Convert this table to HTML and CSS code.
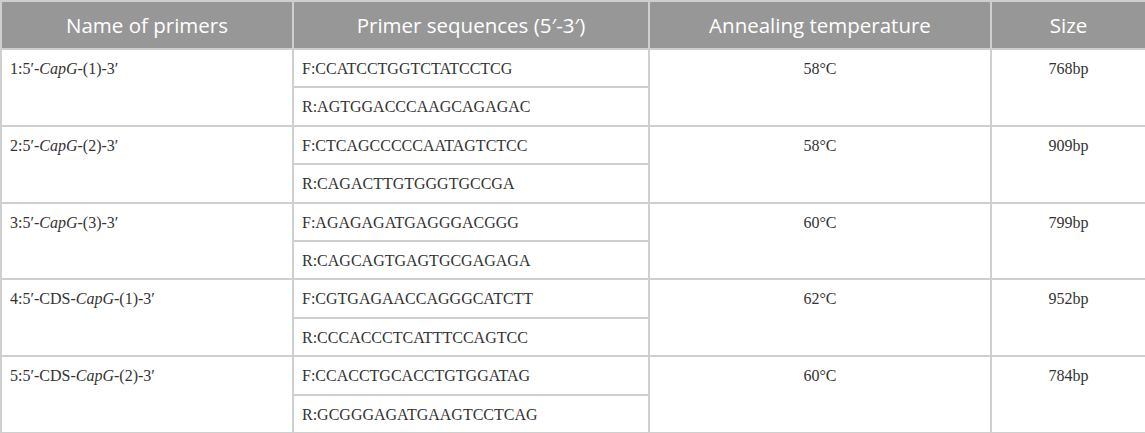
FILE: index.html
```html
<!DOCTYPE html>
<html>
<head>
<meta charset="utf-8">
<link rel="stylesheet" href="styles.css">
</head>
<body>
<table class="primers">
  <colgroup>
    <col class="c1"><col class="c2"><col class="c3"><col class="c4">
  </colgroup>
  <thead>
    <tr><th>Name of primers</th><th>Primer sequences (5′-3′)</th><th>Annealing temperature</th><th>Size</th></tr>
  </thead>
  <tbody>
    <tr><td rowspan="2" class="name">1:5′-<i>CapG</i>-(1)-3′</td><td>F:CCATCCTGGTCTATCCTCG</td><td rowspan="2" class="mid">58°C</td><td rowspan="2" class="mid">768bp</td></tr>
    <tr><td>R:AGTGGACCCAAGCAGAGAC</td></tr>
    <tr><td rowspan="2" class="name">2:5′-<i>CapG</i>-(2)-3′</td><td>F:CTCAGCCCCCAATAGTCTCC</td><td rowspan="2" class="mid">58°C</td><td rowspan="2" class="mid">909bp</td></tr>
    <tr><td>R:CAGACTTGTGGGTGCCGA</td></tr>
    <tr><td rowspan="2" class="name">3:5′-<i>CapG</i>-(3)-3′</td><td>F:AGAGAGATGAGGGACGGG</td><td rowspan="2" class="mid">60°C</td><td rowspan="2" class="mid">799bp</td></tr>
    <tr><td>R:CAGCAGTGAGTGCGAGAGA</td></tr>
    <tr><td rowspan="2" class="name">4:5′-CDS-<i>CapG</i>-(1)-3′</td><td>F:CGTGAGAACCAGGGCATCTT</td><td rowspan="2" class="mid">62°C</td><td rowspan="2" class="mid">952bp</td></tr>
    <tr><td>R:CCCACCCTCATTTCCAGTCC</td></tr>
    <tr><td rowspan="2" class="name">5:5′-CDS-<i>CapG</i>-(2)-3′</td><td>F:CCACCTGCACCTGTGGATAG</td><td rowspan="2" class="mid">60°C</td><td rowspan="2" class="mid">784bp</td></tr>
    <tr><td>R:GCGGGAGATGAAGTCCTCAG</td></tr>
  </tbody>
</table>
</body>
</html>
```
FILE: styles.css
```css
html, body {
  margin: 0;
  padding: 0;
  background: #ffffff;
}
.primers {
  width: 1145px;
  border-collapse: collapse;
  table-layout: fixed;
  border: 2px solid #cfcfcf;
}
.c1 { width: 292px; }
.c2 { width: 356px; }
.c3 { width: 342px; }
.c4 { width: 155px; }
.primers th {
  background: #979797;
  color: #ffffff;
  font-family: "Open Sans", "Noto Sans", sans-serif;
  font-weight: 400;
  font-size: 20.5px;
  height: 46px;
  padding: 0 8px;
  text-align: center;
  vertical-align: middle;
  border-right: 2px solid #cfcfcf;
  border-bottom: 2px solid #cfcfcf;
}
.primers td {
  font-family: "Liberation Serif", serif;
  font-size: 16px;
  line-height: 18px;
  color: #333333;
  height: 26.4px;
  padding: 10px 8px 0;
  vertical-align: top;
  border: 2px solid #cfcfcf;
}
.primers td.mid {
  text-align: center;
}
```
